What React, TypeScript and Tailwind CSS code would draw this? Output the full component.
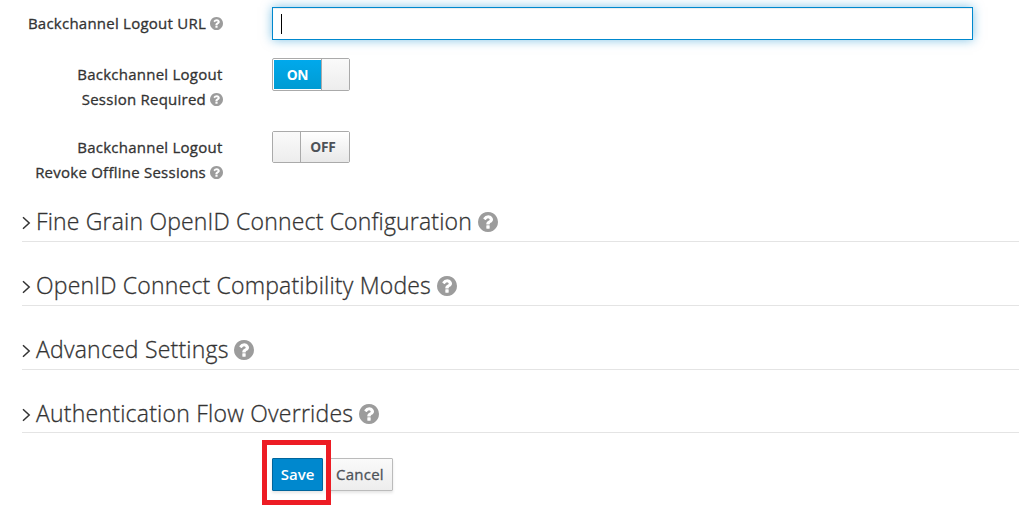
const sections = [
  { title: 'Fine Grain OpenID Connect Configuration', tracking: 'tracking-[0.175px]' },
  { title: 'OpenID Connect Compatibility Modes', tracking: 'tracking-[0.195px]' },
  { title: 'Advanced Settings', tracking: 'tracking-[0.21px]' },
  { title: 'Authentication Flow Overrides', tracking: 'tracking-[0.23px]' },
];

function Help({ className }: { className: string }) {
  return (
    <svg viewBox="128 128 1536 1536" className={`shrink-0 fill-[#9c9c9c] ${className}`}>
      <path d="M1024 1376v-192q0-14-9-23t-23-9h-192q-14 0-23 9t-9 23v192q0 14 9 23t23 9h192q14 0 23-9t9-23zm256-672q0-88-55.5-163t-138.5-116-170-41q-243 0-371 213-15 24 8 42l132 100q7 6 19 6 16 0 25-12 53-68 86-92 34-24 86-24 48 0 85.5 26t37.5 59q0 38-20 61t-68 45q-63 28-115.5 86.5t-52.5 125.5v36q0 14 9 23t23 9h192q14 0 23-9t9-23q0-19 21.5-49.5t54.5-49.5q32-18 49-28.5t46-35 44.5-48 28-60.5 12.5-81zm384 192q0 209-103 385.5t-279.5 279.5-385.5 103-385.5-103-279.5-279.5-103-385.5 103-385.5 279.5-279.5 385.5-103 385.5 103 279.5 279.5 103 385.5z" />
    </svg>
  );
}

function Label({ lines }: { lines: string[] }) {
  return (
    <div className="flex w-[223px] flex-col items-end pr-[0.5px] text-[15px] leading-[25px] tracking-[0.24px] text-[#333] [-webkit-text-stroke:0.3px_#333]">
      {lines.map((line, i) => (
        <div key={line} className="flex items-center gap-[3.5px] whitespace-nowrap">
          <span>{line}</span>
          {i === lines.length - 1 && <Help className="size-[13px]" />}
        </div>
      ))}
    </div>
  );
}

export default function App() {
  return (
    <main className="h-[531px] w-[1019px] overflow-hidden bg-white font-['Open_Sans',sans-serif]">
      <div className="flex h-[58px] gap-[49px]">
        <div className="pt-[11px]">
          <Label lines={['Backchannel Logout URL']} />
        </div>
        <div className="mt-[7px] flex h-[33px] w-[701px] items-center border border-[#0088ce] px-2 shadow-[inset_0_1px_1px_rgba(3,3,3,0.075),0_0_10px_rgba(0,136,206,0.5)]">
          <span className="h-5 w-px bg-black" />
        </div>
      </div>
      <div className="flex h-[73px] gap-[49px]">
        <div className="pt-1">
          <Label lines={['Backchannel Logout', 'Session Required']} />
        </div>
        <div className="flex h-[33px] w-[78px] rounded-[2px] border border-[#aaa]">
          <div className="m-px mr-0 flex flex-1 items-center justify-center bg-linear-to-b from-[#00a9ec] to-[#009bd3] pt-0.5 text-[13.75px] font-bold tracking-[-0.2px] text-white">ON</div>
          <div className="w-[28px] border-l border-[#aaa] bg-linear-to-b from-[#fafafa] to-[#ededed]" />
        </div>
      </div>
      <div className="flex h-[73px] gap-[49px]">
        <div className="pt-1">
          <Label lines={['Backchannel Logout', 'Revoke Offline Sessions']} />
        </div>
        <div className="flex h-8 w-[78px] rounded-[2px] border border-[#aaa]">
          <div className="w-[28px] border-r border-[#aaa] bg-linear-to-b from-[#fafafa] to-[#ededed]" />
          <div className="flex flex-1 items-center justify-center bg-linear-to-b from-white to-[#e8e8e8] pr-1 text-[13.75px] font-bold tracking-[-0.2px] text-[#4d5258]">OFF</div>
        </div>
      </div>
      <div className="ml-[22px] flex flex-col gap-[26px]">
        {sections.map(({ title, tracking }) => (
          <h2 key={title} className="flex h-[38px] border-b border-[#e4e4e4] pt-px text-[23px] leading-[32px] font-light text-[#333] [-webkit-text-stroke:0.3px_#333] last:h-[37px]">
            <svg viewBox="0 0 9 14" className="mt-[11px] mr-[5px] h-3.5 w-[9px] fill-none stroke-[#333]" strokeWidth="1.5">
              <path d="M1 1.2 7.2 7 1 12.8" />
            </svg>
            <span className={`whitespace-nowrap ${tracking}`}>{title}</span>
            <Help className="mt-[7px] ml-[5.5px] size-5" />
          </h2>
        ))}
      </div>
      <div className="mt-[7px] ml-[262px] flex text-[15px] font-semibold">
        <div className="z-10 h-[65px] w-[69px] border-5 border-[#ed1c24] p-[5px] pt-[13px]">
          <button className="flex h-[33px] w-[51px] items-center justify-center rounded-[1px] border border-[#00659c] bg-[#0088ce] text-white shadow-[0_2px_3px_rgba(3,3,3,0.1)]">Save</button>
        </div>
        <button className="mt-[18px] -ml-[5px] flex h-[33px] w-[67px] items-center justify-center rounded-[1px] border border-[#bbb] bg-linear-to-b from-[#fafafa] to-[#ededed] pl-px font-normal tracking-[0.24px] text-[#4d5258] shadow-[0_2px_3px_rgba(3,3,3,0.1)] [-webkit-text-stroke:0.3px_#4d5258]">Cancel</button>
      </div>
    </main>
  );
}
